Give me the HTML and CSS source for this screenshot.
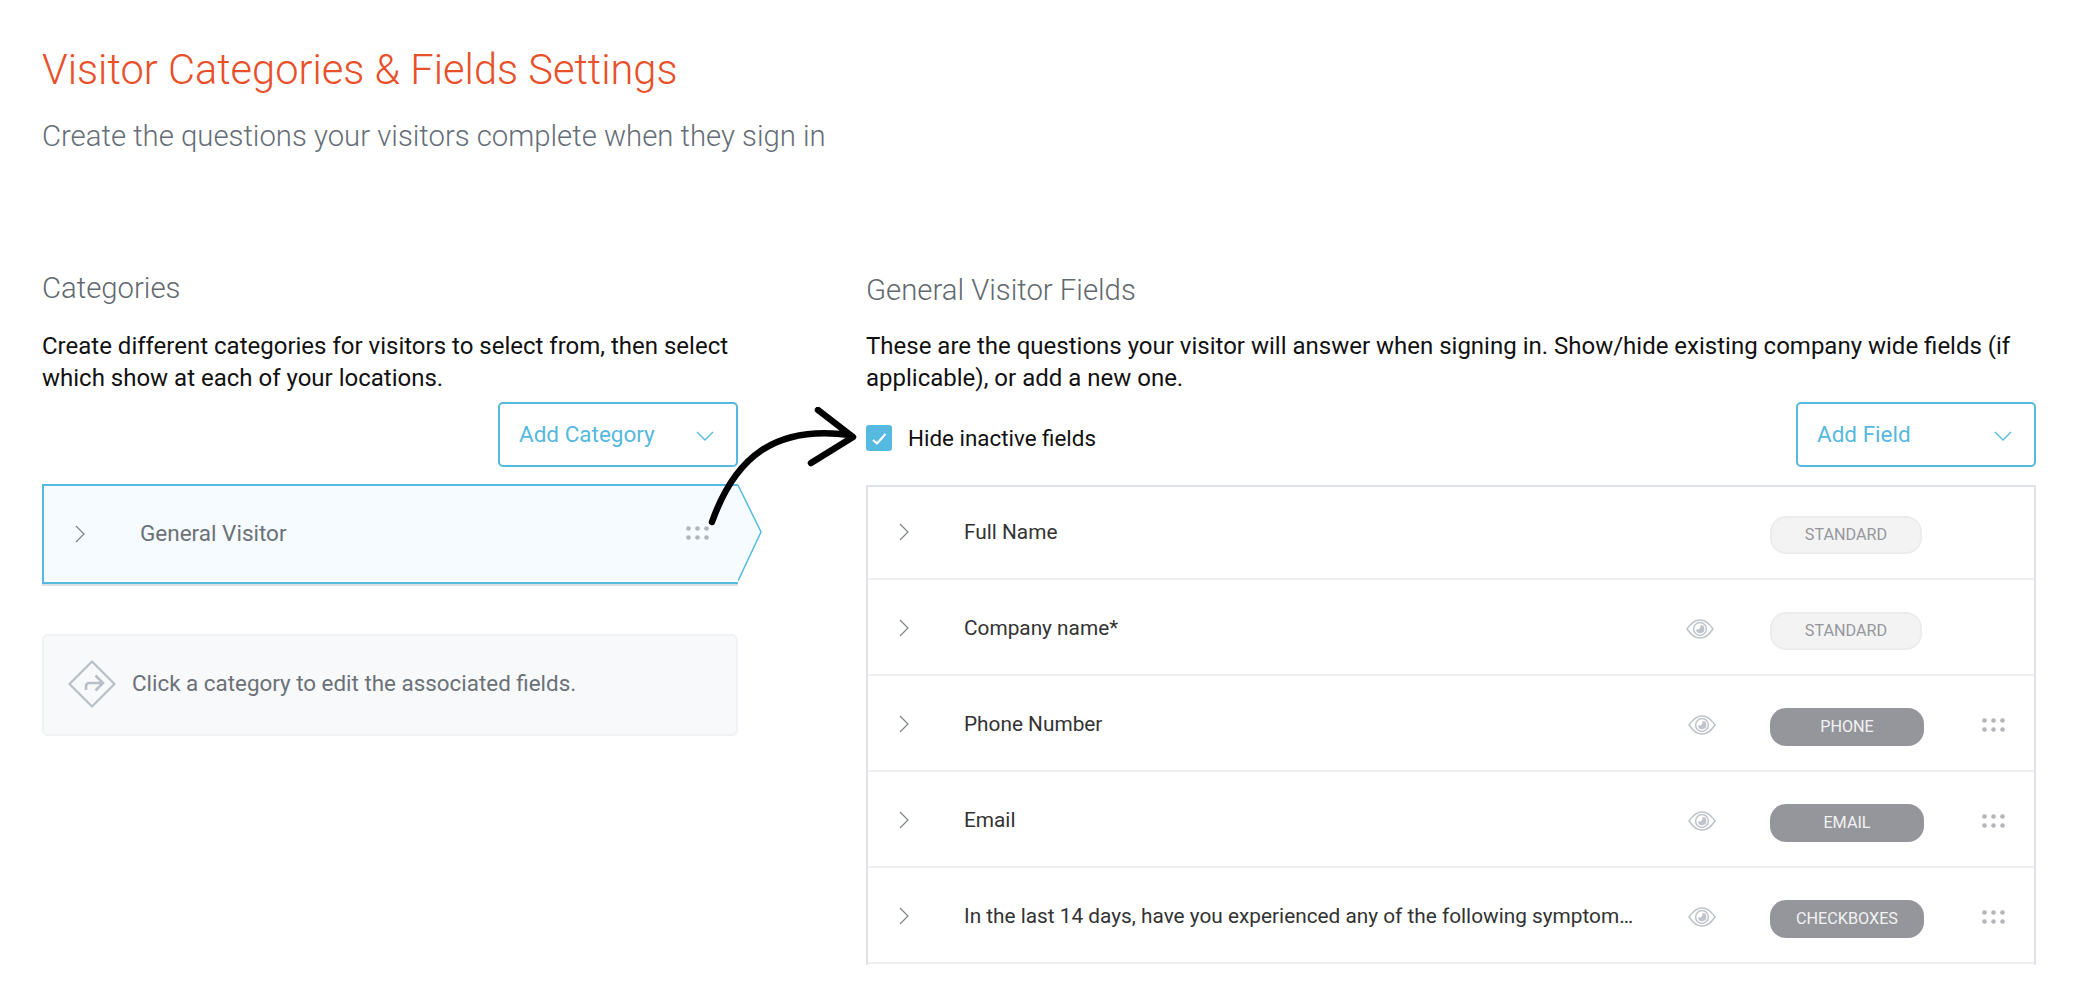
FILE: index.html
```html
<!DOCTYPE html>
<html lang="en">
<head>
<meta charset="utf-8">
<title>Visitor Categories &amp; Fields Settings</title>
<link rel="stylesheet" href="styles.css">
</head>
<body>
<svg width="0" height="0" class="defs" aria-hidden="true">
  <defs>
    <symbol id="chev" viewBox="0 0 10 18"><path d="M1 1l8 8-8 8" fill="none" stroke="#7d8289" stroke-width="1.2"/></symbol>
    <symbol id="down" viewBox="0 0 18 10"><path d="M1 1l8 8 8-8" fill="none" stroke="#56b9e0" stroke-width="1.3"/></symbol>
    <symbol id="dots" viewBox="0 0 23 14"><g fill="#b3b5ba"><circle cx="2.5" cy="2.5" r="2.3"/><circle cx="11.5" cy="2.5" r="2.3"/><circle cx="20.5" cy="2.5" r="2.3"/><circle cx="2.5" cy="11.5" r="2.3"/><circle cx="11.5" cy="11.5" r="2.3"/><circle cx="20.5" cy="11.5" r="2.3"/></g></symbol>
    <symbol id="eye" viewBox="0 0 28 20"><path d="M1 10C5 4 9 1 14 1s9 3 13 9c-4 6-8 9-13 9S5 16 1 10z" fill="none" stroke="#bfc4cb" stroke-width="1.5"/><circle cx="14" cy="10" r="6.4" fill="none" stroke="#bfc4cb" stroke-width="1.5"/><path d="M14.6 5.8a4.2 4.2 0 1 1-4.6 4.4c1.6.8 4.8.4 4.6-4.4z" fill="#bfc4cb"/></symbol>
  </defs>
</svg>
<main class="page">
  <header class="page-head">
    <h1 class="title">Visitor Categories &amp; Fields Settings</h1>
    <p class="subtitle">Create the questions your visitors complete when they sign in</p>
  </header>
  <div class="columns">
    <section class="col">
      <h2 class="heading">Categories</h2>
      <p class="desc">Create different categories for visitors to select from, then select which show at each of your locations.</p>
      <div class="toolbar toolbar-end">
        <button class="add-btn" type="button"><span>Add Category</span><svg class="down"><use href="#down"/></svg></button>
      </div>
      <div class="category">
        <svg class="chev chev-cat"><use href="#chev"/></svg>
        <span class="category-name">General Visitor</span>
        <svg class="dots dots-cat"><use href="#dots"/></svg>
        <svg class="tip" viewBox="0 0 24 100" aria-hidden="true"><path d="M0 1 L23 48 L0 97Z" fill="#f5fbfe"/><path d="M0 1 L23 48 L0 97" fill="none" stroke="#56b9e0" stroke-width="1.5"/></svg>
      </div>
      <div class="hint">
        <svg class="hint-icon" viewBox="0 0 48 48" aria-hidden="true"><path d="M24 1.5L46.5 24 24 46.5 1.5 24z" fill="none" stroke="#b9bfc7" stroke-width="2.2" stroke-linejoin="round"/><path d="M18 30v-3.5c0-2 1.3-3.5 3.5-3.5H34M27.5 15.5l7.5 7.5-7.5 7.5" fill="none" stroke="#b9bfc7" stroke-width="2.6"/></svg>
        <span class="hint-text">Click a category to edit the associated fields.</span>
      </div>
    </section>
    <section class="col">
      <h2 class="heading heading-right">General Visitor Fields</h2>
      <p class="desc desc-right">These are the questions your visitor will answer when signing in. Show/hide existing company wide fields (if applicable), or add a new one.</p>
      <div class="toolbar">
        <label class="check-label"><span class="checkbox"><svg viewBox="0 0 26 26" aria-hidden="true"><path d="M7 15l4 3.5 8.5-9.5" fill="none" stroke="#fff" stroke-width="2.2"/></svg></span>Hide inactive fields</label>
        <button class="add-btn add-field" type="button"><span>Add Field</span><svg class="down"><use href="#down"/></svg></button>
      </div>
      <div class="fields">
        <div class="row row-first row-std">
          <svg class="chev"><use href="#chev"/></svg>
          <span class="name">Full Name</span>
          <span></span>
          <span class="badge badge-std">STANDARD</span>
        </div>
        <div class="row row-std">
          <svg class="chev"><use href="#chev"/></svg>
          <span class="name">Company name*</span>
          <svg class="eye"><use href="#eye"/></svg>
          <span class="badge badge-std">STANDARD</span>
        </div>
        <div class="row">
          <svg class="chev"><use href="#chev"/></svg>
          <span class="name">Phone Number</span>
          <svg class="eye"><use href="#eye"/></svg>
          <span class="badge">PHONE</span>
          <svg class="dots"><use href="#dots"/></svg>
        </div>
        <div class="row">
          <svg class="chev"><use href="#chev"/></svg>
          <span class="name">Email</span>
          <svg class="eye"><use href="#eye"/></svg>
          <span class="badge">EMAIL</span>
          <svg class="dots"><use href="#dots"/></svg>
        </div>
        <div class="row">
          <svg class="chev"><use href="#chev"/></svg>
          <span class="name">In the last 14 days, have you experienced any of the following symptom…</span>
          <svg class="eye"><use href="#eye"/></svg>
          <span class="badge">CHECKBOXES</span>
          <svg class="dots"><use href="#dots"/></svg>
        </div>
      </div>
    </section>
  </div>
  <svg class="annotation" viewBox="0 0 160 130" aria-hidden="true"><path d="M6 115C29 50 69 18 144 28M112 3L147 30 105 56" fill="none" stroke="#000" stroke-width="6.5" stroke-linecap="round" stroke-linejoin="round"/></svg>
</main>
</body>
</html>
```

FILE: styles.css
```css
* { box-sizing: border-box; }
html, body { margin: 0; height: 100%; overflow: hidden; background: #fff; }
body { font-family: Roboto, "Liberation Sans", sans-serif; color: #111; }
.defs { position: absolute; }
.page { position: relative; height: 994px; padding: 46px 46px 0 42px; }
.title { margin: 0; font-size: 41.6px; line-height: 48px; font-weight: 300; color: #e8502a; }
.subtitle { margin: 24px 0 0; font-size: 29.3px; line-height: 36px; font-weight: 300; color: #666e78; }
.columns { display: grid; grid-template-columns: 696px 1170px; column-gap: 128px; margin-top: 118px; }
.heading { margin: 0; font-size: 29.3px; line-height: 32px; font-weight: 300; color: #62696f; }
.heading-right { margin-top: 2px; }
.desc { margin: 26px 0 0; font-size: 24px; line-height: 32px; font-weight: 400; color: #111; }
.desc-right { margin-top: 24px; }
.toolbar { display: flex; align-items: center; justify-content: space-between; margin-top: 8px; height: 65px; }
.toolbar-end { justify-content: flex-end; }
.add-btn { display: flex; align-items: center; justify-content: space-between; width: 240px; height: 65px; padding: 0 22px 2px 19px; background: #fff; border: 2px solid #56b9e0; border-radius: 5px; font: 400 22.5px Roboto, sans-serif; color: #56b9e0; }
.down { width: 18px; height: 10px; margin-top: 4px; }
.check-label { display: flex; align-items: center; gap: 16px; margin-top: 6px; font-size: 22.4px; color: #111; }
.checkbox { display: block; width: 26px; height: 26px; border-radius: 3px; background: #56b9e0; }
.checkbox svg { display: block; width: 26px; height: 26px; }
.category { position: relative; display: flex; align-items: center; height: 100px; margin-top: 17px; padding: 0 29px 0 31px; background: #f5fbfe; border: 2px solid #56b9e0; border-right: 0; box-shadow: 0 2px 0 #dcdfe3; }
.chev { width: 10px; height: 18px; }
.chev-cat { margin-right: 55px; }
.category-name { flex: 1; margin-top: -3px; font-size: 22.5px; color: #6c7178; }
.dots { width: 23px; height: 14px; }
.dots-cat { margin-top: -3px; }
.tip { position: absolute; top: -2px; left: 100%; width: 24px; height: 100px; }
.hint { display: flex; align-items: center; gap: 16px; height: 102px; margin-top: 50px; padding: 0 24px; background: #f7f9fb; border: 2px solid #eff1f4; border-radius: 6px; font-size: 22.4px; color: #6c7178; }
.hint-icon { width: 48px; height: 48px; flex: none; margin-top: -2px; }
.hint-text { margin-top: -5px; }
.fields { height: 480px; margin-top: 18px; overflow: hidden; border: 2px solid #dfe2e8; border-bottom: 0; }
.row { display: grid; grid-template-columns: 96px 672px 134px 154px 1fr; align-items: center; height: 96px; border-bottom: 2px solid #eeeff4; }
.row-first { margin-top: -3px; }
.row .chev { margin: 1px 0 0 31px; }
.name { overflow: hidden; white-space: nowrap; text-overflow: ellipsis; margin-top: 2px; font-size: 20.8px; color: #333; }
.eye { justify-self: center; width: 28px; height: 20px; margin: 3px 3px 0 0; }
.row-std .eye { margin-right: 7px; }
.badge { display: flex; align-items: center; justify-content: center; height: 38px; margin-top: 7px; border-radius: 16px; background: #95969b; font-size: 16.2px; color: #f2f2f2; }
.badge-std { width: 152px; background: #f3f3f3; border: 2px solid #ececec; color: #96979c; }
.row .dots { justify-self: end; margin: 4px 29px 0 0; }
.annotation { position: absolute; top: 407px; left: 706px; width: 160px; height: 130px; }
```
